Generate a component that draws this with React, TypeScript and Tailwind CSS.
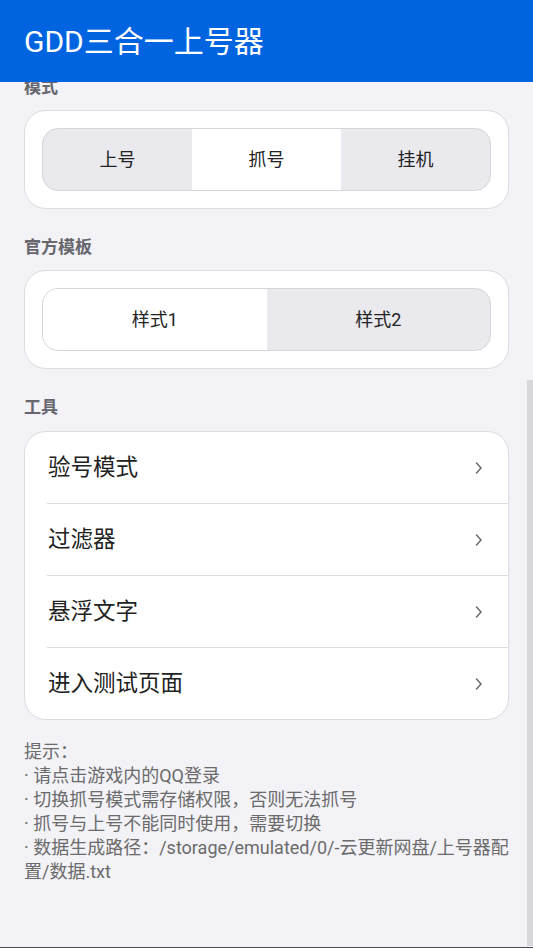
import { useState } from 'react';

function Chevron() {
  return (
    <svg width="9" height="14" viewBox="0 0 9 14" fill="none">
      <path d="M2.5 2 7 7 2.5 12" stroke="#6a6a6a" strokeWidth="1.5" strokeLinecap="round" strokeLinejoin="round" />
    </svg>
  );
}

function Segmented({
  options,
  value,
  onChange,
  cols
}: {
  options: string[];
  value: number;
  onChange: (i: number) => void;
  cols: string;
}) {
  return (
    <div className={`grid ${cols} h-[63px] overflow-hidden rounded-[16px] border border-[#d5d5da] bg-[#e9e9ee]`}>
      {options.map((opt, i) => (
        <button
          key={opt}
          type="button"
          onClick={() => onChange(i)}
          className={`flex items-center justify-center text-[18px] text-[#222] ${i === value ? 'bg-white' : ''}`}
        >
          {opt}
        </button>
      ))}
    </div>
  );
}

const tools = ['验号模式', '过滤器', '悬浮文字', '进入测试页面'];

const tips = [
  '提示：',
  '· 请点击游戏内的QQ登录',
  '· 切换抓号模式需存储权限，否则无法抓号',
  '· 抓号与上号不能同时使用，需要切换',
  '· 数据生成路径：/storage/emulated/0/-云更新网盘/上号器配置/数据.txt'
];

export default function App() {
  const [mode, setMode] = useState(1);
  const [tpl, setTpl] = useState(0);

  return (
    <div className="relative h-[948px] w-[533px] overflow-hidden border-b border-[#4a4a4a] bg-[#f2f2f7] font-[Roboto,'Noto_Sans_CJK_SC',sans-serif]">
      <header className="relative z-10 flex h-[82px] items-center bg-[#0064e1] px-6 pt-[2px]">
        <h1 className="text-[30px] leading-none text-white">GDD三合一上号器</h1>
      </header>

      <main className="-mt-[7px] px-6">
        <div className="text-[17px] font-semibold leading-[24px] text-[#66666c]">模式</div>
        <section className="mt-[11px] rounded-[22px] border border-[#dcdce0] bg-white p-[17px]">
          <Segmented options={['上号', '抓号', '挂机']} value={mode} onChange={setMode} cols="grid-cols-3" />
        </section>

        <div className="mt-[26px] text-[17px] font-semibold leading-[24px] text-[#66666c]">官方模板</div>
        <section className="mt-[11px] rounded-[22px] border border-[#dcdce0] bg-white p-[17px]">
          <Segmented options={['样式1', '样式2']} value={tpl} onChange={setTpl} cols="grid-cols-2" />
        </section>

        <div className="mt-[26px] text-[17px] font-semibold leading-[24px] text-[#66666c]">工具</div>
        <section className="mt-[12px] overflow-hidden rounded-[22px] border border-[#dcdce0] bg-white">
          {tools.map((t, i) => (
            <div key={t}>
              {i > 0 && <div className="ml-[22px] h-px bg-[#dedee2]" />}
              <button type="button" className="flex h-[71px] w-full items-center justify-between pl-[23px] pr-[25px] text-left">
                <span className="text-[22.5px] text-[#222]">{t}</span>
                <Chevron />
              </button>
            </div>
          ))}
        </section>

        <div className="mt-[20px] text-[18px] leading-[24px] text-[#6b6b6b]">
          {tips.map((t) => (
            <p key={t}>{t}</p>
          ))}
        </div>
      </main>

      <div className="absolute right-0 top-[380px] h-[566px] w-[6px] bg-[#d7d7dc]" />
    </div>
  );
}
